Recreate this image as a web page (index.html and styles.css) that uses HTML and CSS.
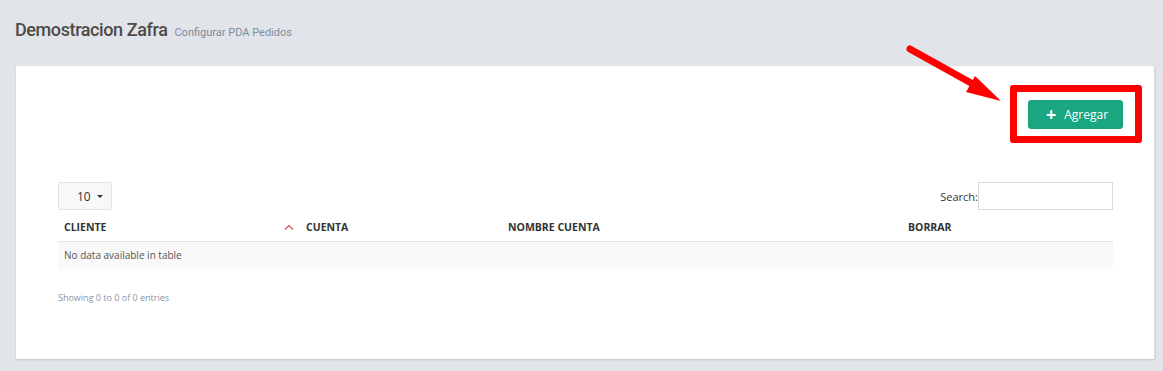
FILE: index.html
```html
<!DOCTYPE html>
<html>
<head>
<meta charset="utf-8">
<link rel="stylesheet" href="styles.css">
</head>
<body>
<div class="page">
  <div class="heading">
    <h1 class="title">Demostracion Zafra</h1>
    <span class="subtitle">Configurar PDA Pedidos</span>
  </div>
  <div class="card">
    <div class="toolbar">
      <div class="highlight">
        <button class="btn-add"><span class="plus">+</span>Agregar</button>
      </div>
    </div>
    <div class="table-wrap">
      <div class="controls">
        <div class="length">10 <span class="caret"></span></div>
        <label class="search">Search:<input type="text" class="search-input"></label>
      </div>
      <table class="grid">
        <thead>
          <tr>
            <th class="c1">CLIENTE<svg class="sort" width="10" height="6" viewBox="0 0 10 6"><path d="M1 5.5 L5 1.5 L9 5.5" fill="none" stroke="#d9534f" stroke-width="1.2"/></svg></th>
            <th class="c2">CUENTA</th>
            <th class="c3">NOMBRE CUENTA</th>
            <th class="c4">BORRAR</th>
          </tr>
        </thead>
        <tbody>
          <tr><td colspan="4" class="empty">No data available in table</td></tr>
        </tbody>
      </table>
      <div class="info">Showing 0 to 0 of 0 entries</div>
    </div>
  </div>
  <svg class="arrow" width="110" height="70" viewBox="0 0 110 70">
    <line x1="5" y1="4" x2="75" y2="43" stroke="#ff0000" stroke-width="7" stroke-linecap="round"/>
    <polygon points="70,31 61,47 96,56" fill="#ff0000"/>
  </svg>
</div>
</body>
</html>
```

FILE: styles.css
```css
html, body {
  margin: 0;
  padding: 0;
}
body {
  background: #e1e5e9;
  font-family: "Open Sans", "Liberation Sans", sans-serif;
}
.page {
  position: relative;
  width: 1163px;
  height: 371px;
  overflow: hidden;
}
.heading {
  display: flex;
  align-items: baseline;
  gap: 7px;
  padding: 19px 0 0 15px;
  height: 47px;
  box-sizing: border-box;
}
.title {
  margin: 0;
  font-family: "Roboto", "Liberation Sans", sans-serif;
  font-size: 18px;
  font-weight: 500;
  color: #4f4a47;
  letter-spacing: -0.4px;
}
.subtitle {
  font-family: "Roboto", "Liberation Sans", sans-serif;
  font-size: 11px;
  color: #7d8aa0;
}
.card {
  margin: 0 8px 0 16px;
  margin-top: 19px;
  background: #ffffff;
  height: 293px;
  box-shadow: 0 1px 2px rgba(0,0,0,0.15);
  border-right: 1px solid #d6dade;
}
.toolbar {
  display: flex;
  justify-content: flex-end;
  padding: 19px 12px 0 0;
}
.highlight {
  border: 7px solid #ff0000;
  border-radius: 3px;
  padding: 8px 12px 7px 11px;
}
.btn-add {
  display: flex;
  align-items: center;
  justify-content: center;
  width: 95px;
  height: 29px;
  background: #1aa681;
  border: 1px solid #17a07a;
  border-radius: 3px;
  color: #ffffff;
  font-family: "Open Sans", "Liberation Sans", sans-serif;
  font-size: 12px;
  padding: 0 0 0 3px;
}
.plus {
  font-size: 18px;
  font-weight: 700;
  margin-right: 8px;
  line-height: 1;
  position: relative;
  top: -1px;
}
.table-wrap {
  padding: 39px 41px 0 42px;
}
.controls {
  display: flex;
  justify-content: space-between;
  align-items: center;
  height: 28px;
}
.length {
  width: 54px;
  height: 28px;
  box-sizing: border-box;
  border: 1px solid #dfe2e6;
  border-radius: 3px;
  background: #f7f8f9;
  font-size: 12px;
  color: #333;
  display: flex;
  align-items: center;
  padding-left: 18px;
  gap: 6px;
}
.caret {
  width: 0;
  height: 0;
  border-left: 3px solid transparent;
  border-right: 3px solid transparent;
  border-top: 3px solid #333;
}
.search {
  display: flex;
  align-items: center;
  font-size: 11px;
  color: #333;
}
.search-input {
  width: 135px;
  height: 28px;
  box-sizing: border-box;
  border: 1px solid #d5d8dc;
  margin: 0;
}
.grid {
  width: 100%;
  border-collapse: collapse;
  margin-top: 8px;
}
.grid th {
  text-align: left;
  font-size: 10.5px;
  font-weight: 700;
  color: #333;
  height: 23px;
  padding: 0 6px 4px 6px;
  box-sizing: border-box;
  border-bottom: 1px solid #dfe1e4;
  vertical-align: middle;
}
.grid th.c1 {
  width: 242px;
  position: relative;
}
.sort {
  position: absolute;
  right: 6px;
  top: 6px;
}
.grid th.c2 { width: 202px; }
.grid th.c3 { width: 400px; }
.empty {
  background: #f9f9f9;
  height: 27px;
  font-size: 10px;
  color: #555;
  padding: 0 6px;
}
.info {
  margin-top: 22px;
  font-size: 9px;
  color: #8a95aa;
}
.arrow {
  position: absolute;
  left: 905px;
  top: 45px;
}
```
